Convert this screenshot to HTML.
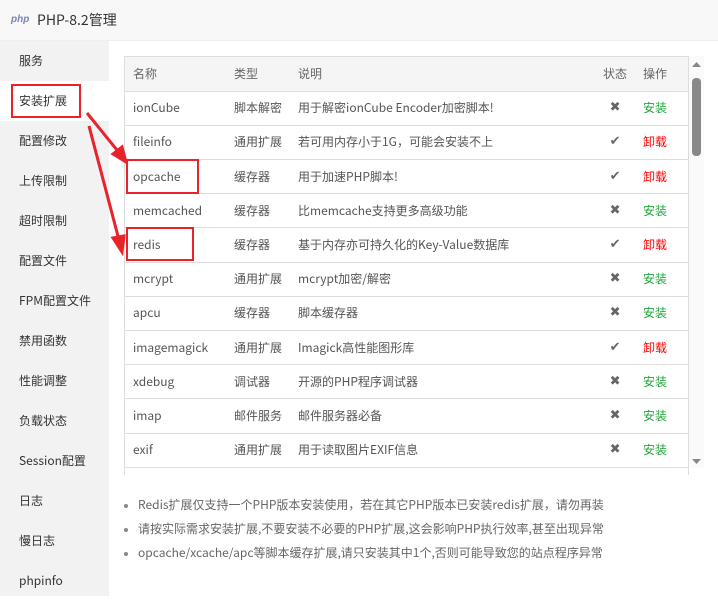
<!DOCTYPE html><html><head><meta charset="utf-8"><style>
*{margin:0;padding:0;box-sizing:border-box}
body{width:718px;height:596px;overflow:hidden;background:#fff;font-family:"Noto Sans CJK SC","Liberation Sans",sans-serif;font-size:12px;color:#555;position:relative}
.title{height:41px;background:#f8f8f8;border-bottom:1px solid #eee;font-size:14px;color:#333;line-height:40px;padding-left:37px;position:relative}
.title i{position:absolute;left:11px;top:0;font-size:10px;font-weight:bold;font-style:italic;color:#7a86b8;font-family:"Liberation Sans",sans-serif}
.side{position:absolute;left:0;top:41px;width:109px;height:555px;background:#f2f2f2}
.side div{height:40px;line-height:40px;padding-left:19px;color:#333;font-size:12px}
.side .on{background:#fff}
.tw{position:absolute;left:124px;top:56px;width:565px;height:419px;overflow:hidden;border:1px solid #ddd;border-bottom:none}
table{border-collapse:collapse;width:100%}
td{height:34.2px;line-height:18px;border-bottom:1px solid #ddd;padding:0 8px;white-space:nowrap;color:#555;vertical-align:middle}
tr.h td{background:#f5f5f5;color:#666}
.x{font-size:13px;color:#666;text-align:center;font-family:"DejaVu Sans",sans-serif}
.g{color:#20a53a}.r{color:#f00}
.sb{position:absolute;left:689px;top:56px;width:15px;height:412px;background:#fafafa}
.sb .th{position:absolute;left:3px;top:22px;width:9px;height:78px;background:#888;border-radius:4px}
ul{position:absolute;left:124px;top:493px;list-style:none;color:#666;font-size:12px}
ul li{height:24px;line-height:24px;padding-left:14px;position:relative}
ul li:before{content:"";position:absolute;left:0;top:11px;width:4px;height:4px;border-radius:2px;background:#888}
.box{position:absolute;border:2px solid #e8232a}
</style></head><body>
<div class="title"><i>php</i>PHP-8.2管理</div>
<div class="side"><div>服务</div><div class="on">安装扩展</div><div>配置修改</div><div>上传限制</div><div>超时限制</div><div>配置文件</div><div>FPM配置文件</div><div>禁用函数</div><div>性能调整</div><div>负载状态</div><div>Session配置</div><div>日志</div><div>慢日志</div><div>phpinfo</div></div>
<div class="tw"><table>
<colgroup><col style="width:101px"><col style="width:64px"><col style="width:305px"><col style="width:37px"><col></colgroup>
<tr class="h"><td>名称</td><td>类型</td><td>说明</td><td>状态</td><td>操作</td></tr>
<tr><td>ionCube</td><td>脚本解密</td><td>用于解密ionCube Encoder加密脚本!</td><td class="x">✖</td><td class="g">安装</td></tr>
<tr><td>fileinfo</td><td>通用扩展</td><td>若可用内存小于1G，可能会安装不上</td><td class="x">✔</td><td class="r">卸载</td></tr>
<tr><td>opcache</td><td>缓存器</td><td>用于加速PHP脚本!</td><td class="x">✔</td><td class="r">卸载</td></tr>
<tr><td>memcached</td><td>缓存器</td><td>比memcache支持更多高级功能</td><td class="x">✖</td><td class="g">安装</td></tr>
<tr><td>redis</td><td>缓存器</td><td>基于内存亦可持久化的Key-Value数据库</td><td class="x">✔</td><td class="r">卸载</td></tr>
<tr><td>mcrypt</td><td>通用扩展</td><td>mcrypt加密/解密</td><td class="x">✖</td><td class="g">安装</td></tr>
<tr><td>apcu</td><td>缓存器</td><td>脚本缓存器</td><td class="x">✖</td><td class="g">安装</td></tr>
<tr><td>imagemagick</td><td>通用扩展</td><td>Imagick高性能图形库</td><td class="x">✔</td><td class="r">卸载</td></tr>
<tr><td>xdebug</td><td>调试器</td><td>开源的PHP程序调试器</td><td class="x">✖</td><td class="g">安装</td></tr>
<tr><td>imap</td><td>邮件服务</td><td>邮件服务器必备</td><td class="x">✖</td><td class="g">安装</td></tr>
<tr><td>exif</td><td>通用扩展</td><td>用于读取图片EXIF信息</td><td class="x">✖</td><td class="g">安装</td></tr>
<tr><td>&nbsp;</td><td></td><td></td><td></td><td></td></tr>
</table></div>
<div class="sb"><div class="th"></div>
<svg style="position:absolute;left:3px;top:6px" width="9" height="6"><path d="M0 5L4.5 0L9 5Z" fill="#888"/></svg>
<svg style="position:absolute;left:3px;top:403px" width="9" height="6"><path d="M0 0L4.5 5L9 0Z" fill="#888"/></svg></div>
<ul><li>Redis扩展仅支持一个PHP版本安装使用，若在其它PHP版本已安装redis扩展，请勿再装</li><li>请按实际需求安装扩展,不要安装不必要的PHP扩展,这会影响PHP执行效率,甚至出现异常</li><li>opcache/xcache/apc等脚本缓存扩展,请只安装其中1个,否则可能导致您的站点程序异常</li></ul>
<div class="box" style="left:11px;top:84px;width:70px;height:34px"></div>
<div class="box" style="left:126px;top:159px;width:73px;height:35px"></div>
<div class="box" style="left:126px;top:227px;width:68px;height:34px"></div>
<svg style="position:absolute;left:0;top:0" width="718" height="596"><g stroke="#e8232a" stroke-width="3" fill="#e8232a">
<line x1="87" y1="113" x2="121" y2="155"/><path d="M126 162L113 154L122 147Z"/>
<line x1="89" y1="126" x2="119" y2="240"/><path d="M122 252L113 238L124 236Z"/></g></svg>
</body></html>
